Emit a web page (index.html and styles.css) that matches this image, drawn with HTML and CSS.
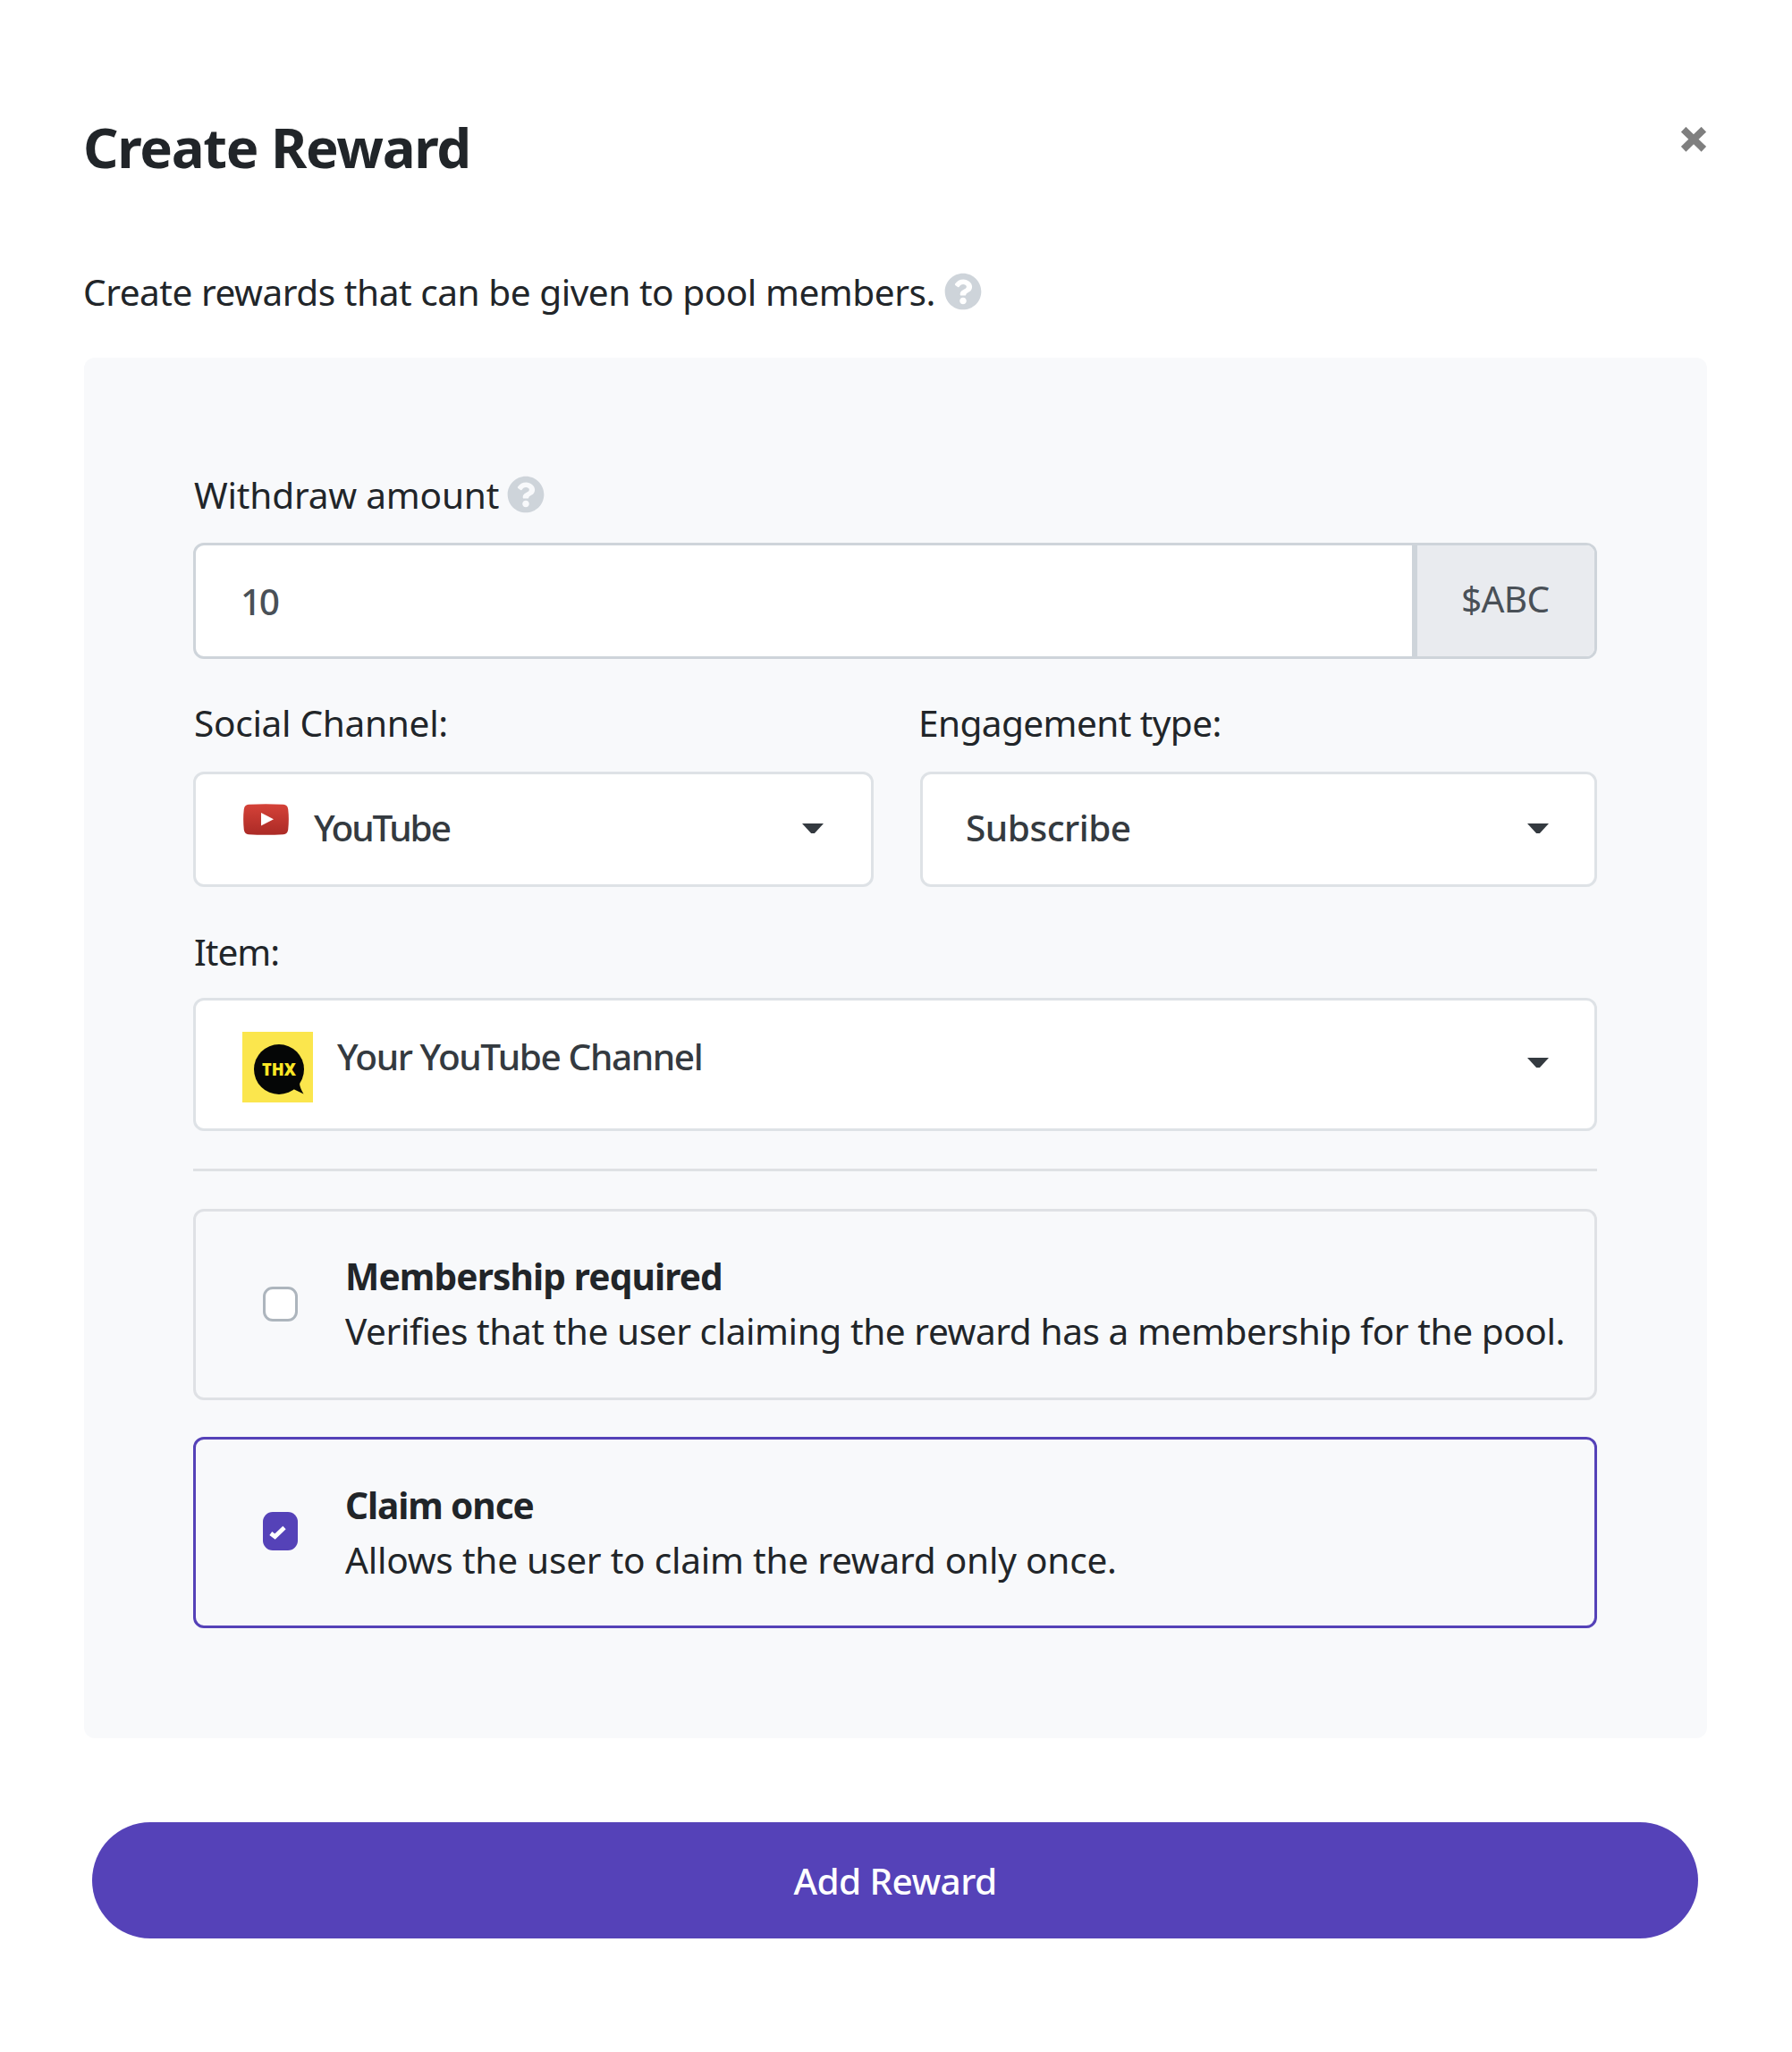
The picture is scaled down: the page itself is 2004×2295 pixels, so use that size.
FILE: index.html
```
<!DOCTYPE html>
<html lang="en">
<head>
<meta charset="utf-8">
<title>Create Reward</title>
<link rel="stylesheet" href="styles.css">
</head>
<body>
<main class="dialog">
  <header class="header">
    <h1 class="title">Create Reward</h1>
    <svg class="close" viewBox="0 0 28 28"><path d="M5.500 5.500L22.500 22M22.500 5.500L5.500 22" stroke="#7f7f7f" stroke-width="8" stroke-linecap="square"/></svg>
  </header>
  <p class="text intro"><span>Create rewards that can be given to pool members.</span>
    <svg class="help" viewBox="0 0 512 512"><use href="#help"/></svg></p>
  <section class="panel">
    <div class="text withdraw"><span>Withdraw amount</span>
      <svg class="help" viewBox="0 0 512 512"><use href="#help"/></svg></div>
    <div class="group">
      <div class="amount">10</div>
      <div class="addon">$ABC</div>
    </div>
    <div class="columns">
      <div>
        <div class="text social">Social Channel:</div>
        <div class="select channel">
          <svg class="youtube" viewBox="0 0 51 35"><defs><linearGradient id="red" x2="0" y2="1"><stop stop-color="#d54238"/><stop offset="1" stop-color="#ab2a26"/></linearGradient></defs><path d="M6 .8Q25 -.4 45 .8Q49.500 1 50.200 6Q51.500 17 50.200 29Q49.500 34 45 34.200Q25 35.400 6 34.200Q1.500 34 .8 29Q-.5 17 .8 6Q1.500 1 6 .8Z" fill="url(#red)"/><path d="M20 10L34 17.300L20 24.500Z" fill="#fff"/></svg>
          <span>YouTube</span><i class="caret"></i>
        </div>
      </div>
      <div>
        <div class="text engagement">Engagement type:</div>
        <div class="select"><span>Subscribe</span><i class="caret"></i></div>
      </div>
    </div>
    <div class="text item">Item:</div>
    <div class="select tall">
      <svg class="avatar" viewBox="0 0 79 79"><rect width="79" height="79" fill="#fbe64d"/><circle cx="41" cy="42" r="28" fill="#050606"/><path d="M64 57Q64 62 68.500 69.500L55 63Z" fill="#050606"/><text x="41" y="49" text-anchor="middle" class="thx" textLength="38" lengthAdjust="spacingAndGlyphs">THX</text></svg>
      <span>Your YouTube Channel</span><i class="caret"></i>
    </div>
    <hr class="rule">
    <div class="option">
      <i class="box"></i>
      <div><b class="option-title">Membership required</b><p class="option-text">Verifies that the user claiming the reward has a membership for the pool.</p></div>
    </div>
    <div class="option checked">
      <svg class="box" viewBox="0 0 39 43"><path d="M8.800 24L13.500 27.500L24 17.500" fill="none" stroke="#fff" stroke-width="4.800"/></svg>
      <div><b class="option-title">Claim once</b><p class="option-text">Allows the user to claim the reward only once.</p></div>
    </div>
  </section>
  <button class="submit">Add Reward</button>
</main>
<svg class="symbols" width="0" height="0"><defs><path id="help" d="M504 256c0 137-111 248-248 248S8 393 8 256 119 8 256 8s248 111 248 248zM262.700 90c-54.500 0-89.300 23-116.500 63.800-3.600 5.300-2.400 12.400 2.700 16.300l34.700 26.300c5.200 3.900 12.600 3 16.700-2.100 17.900-22.700 30.100-35.800 57.300-35.800 20.400 0 45.700 13.100 45.700 33 0 15-12.400 22.700-32.500 34C247.100 238.500 216 254.900 216 296v4c0 6.600 5.400 12 12 12h56c6.600 0 12-5.400 12-12v-1.300c0-28.500 83.200-29.600 83.200-106.700 0-58-60.200-102-116.500-102zM256 338c-25.400 0-46 20.600-46 46s20.600 46 46 46 46-20.600 46-46-20.600-46-46-46z" fill="#ced4da"/></defs></svg>
</body>
</html>
```
FILE: styles.css
```
* { box-sizing: border-box; }
html { overflow: hidden; }
body { margin: 0; background: #fff; color: #212529; font: 40.6px/58px "Noto Sans", sans-serif; }
p, h1 { margin: 0; }
svg { flex: none; display: block; }
.dialog { width: 2004px; height: 2295px; padding: 126px 95px 0 94px; overflow: hidden; }
.header { display: flex; justify-content: space-between; height: 80px; }
.title { margin-left: -1px; font-size: 61.6px; line-height: 76px; font-weight: 700; letter-spacing: -1.3px; }
.close { width: 28px; height: 28px; margin: 16px 1px 0 0; }
.text { display: flex; height: 60px; white-space: nowrap; }
.intro { margin: 92px 0 0 -1px; letter-spacing: -0.47px; }
.intro span { width: 954px; }
.help { width: 42px; height: 42px; margin: 7px 0 0 9px; }
.panel { margin-top: 42px; height: 1544px; padding: 125px 123px 0 122px; background: #f8f9fb; border-radius: 12px; }
.withdraw { padding-left: 1px; letter-spacing: -0.2px; }
.withdraw span { width: 341px; }
.group { display: flex; height: 130px; margin-top: 22px; border: 3px solid #ced4da; border-radius: 12px; background: #fff; color: #495057; overflow: hidden; }
.amount { flex: 1; padding: 34px 0 0 50px; font-weight: 500; letter-spacing: -2.5px; }
.addon { width: 204px; border-left: 6px solid #ced4da; background: #e9ebef; padding: 31px 0 0 49px; letter-spacing: -0.7px; }
.columns { display: grid; grid-template-columns: 761px 757px; column-gap: 52px; margin-top: 43px; }
.social { padding-left: 1px; letter-spacing: -0.3px; }
.engagement { margin-left: -2px; letter-spacing: -0.6px; }
.select { display: flex; height: 129px; margin-top: 23px; padding: 31px 51px 0 48px; border: 3px solid #dee2e6; border-radius: 12px; background: #fff; color: #343a40; font-weight: 500; letter-spacing: -0.5px; white-space: nowrap; }
.channel { padding: 31px 53px 0 50px; letter-spacing: -2.1px; }
.caret { margin: 24px 0 0 auto; width: 24px; height: 11px; background: #343a40; clip-path: polygon(0 0, 100% 0, 58% 100%, 42% 100%); }
.youtube { width: 51px; height: 35px; margin: 2px 28px 0 3px; }
.item { margin-top: 44px; padding-left: 1px; letter-spacing: -1px; }
.tall { height: 149px; margin-top: 20px; padding: 34px 51px 0 50px; letter-spacing: -1.4px; }
.tall .caret { margin-top: 30px; }
.avatar { width: 79px; height: 79px; margin: 1px 27px 0 2px; }
.thx { font: 800 19px "Open Sans", sans-serif; letter-spacing: 0; fill: #fbe625; }
.rule { height: 3px; margin: 42px 0 0; border: 0; background: #dfe1e4; }
.option { display: flex; height: 214px; margin-top: 42px; padding: 44px 0 0 75px; border: 3px solid #dfe1e5; border-radius: 12px; white-space: nowrap; }
.option-title { display: block; height: 61px; letter-spacing: -0.85px; }
.option-text { letter-spacing: -0.43px; }
.box { width: 39px; height: 39px; margin: 40px 53px 0 0; border: 3px solid #adb5bd; border-radius: 11px; background: #fff; }
.checked { margin-top: 41px; padding-top: 45px; border-color: #5542b8; }
.checked .box { height: 43px; margin-top: 36px; border: 0; background: #5542b8; }
.checked .option-title { letter-spacing: -1.1px; }
.checked .option-text { letter-spacing: -0.23px; }
.submit { display: block; width: 1796px; height: 130px; margin: 94px 0 0 9px; padding: 2px 0 0; border: 0; border-radius: 65px; background: #5542b8; color: #fff; font: inherit; font-weight: 500; letter-spacing: -0.6px; }
```
